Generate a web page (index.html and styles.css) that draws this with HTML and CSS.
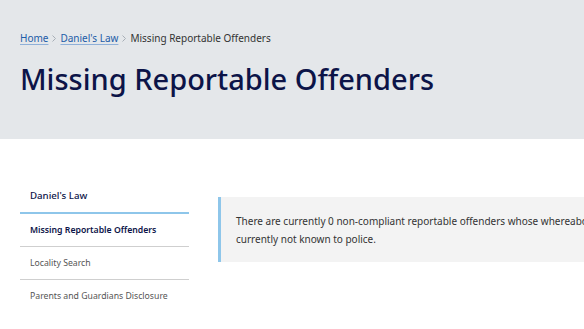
FILE: index.html
```html
<!DOCTYPE html>
<html lang="en">
  <head>
    <meta charset="UTF-8" />
    <meta name="viewport" content="width=device-width, initial-scale=1.0" />
    <title>Missing Reportable Offenders</title>
    <link rel="stylesheet" href="styles.css">
  </head>
  <body>
    <!-- 页头 -->
    <header class="banner">
      <nav class="crumbs">
        <a href="#">Home</a>
        <svg class="sep" width="4" height="7" viewBox="0 0 4 7"><path d="M0.5 0.5L3.5 3.5L0.5 6.5"></path></svg>
        <a href="#">Daniel's Law</a>
        <svg class="sep" width="4" height="7" viewBox="0 0 4 7"><path d="M0.5 0.5L3.5 3.5L0.5 6.5"></path></svg>
        <span class="current">Missing Reportable Offenders</span>
      </nav>
      <h1 class="title">Missing Reportable Offenders</h1>
    </header>

    <div class="main">
      <!-- 侧栏 -->
      <aside class="side">
        <div class="side-head">Daniel's Law</div>
        <a class="side-link active" href="#">Missing Reportable Offenders</a>
        <a class="side-link" href="#">Locality Search</a>
        <a class="side-link last" href="#">Parents and Guardians Disclosure</a>
      </aside>

      <!-- 内容 -->
      <section class="content">
        <div class="notice">
          There are currently 0 non-compliant reportable offenders whose whereabouts are
          currently not known to police.
        </div>
      </section>
    </div>
  </body>
</html>
```

FILE: styles.css
```css
body {
  margin: 0;
  padding: 0;
  background: #fff;
  color: #333;
  font-family: 'Noto Sans', 'Open Sans', sans-serif;
  overflow: hidden;
}

.banner {
  background-color: #e4e7ea;
  padding: 30px 20px 36px;
  height: 73px;
}

.crumbs {
  display: flex;
  align-items: center;
  gap: 4px;
  font-size: 10px;
  line-height: 16px;
  color: #333;
}

.crumbs a {
  color: #1d5ca8;
  text-decoration: underline;
  text-decoration-color: #8fb0d8;
  text-underline-offset: 2px;
}

.crumbs .sep {
  fill: none;
  stroke: #a7aeb6;
  stroke-width: 1;
  margin-top: 1px;
}

.title {
  margin: 15px 0 0;
  font-size: 29px;
  font-weight: 500;
  line-height: 36px;
  color: #0c1448;
}

.main {
  display: flex;
  gap: 29px;
  padding: 38px 0 0 20px;
}

.side {
  width: 169px;
  flex: none;
}

.side-head {
  font-size: 9.7px;
  font-weight: 500;
  color: #0c1448;
  padding: 12px 10px 10px;
  border-bottom: 2px solid #8ec6ea;
}

.side-link {
  display: block;
  font-size: 8.7px;
  color: #555;
  text-decoration: none;
  padding: 9px 10px 9px;
  border-bottom: 1px solid #cfcfcf;
  line-height: 14px;
}

.side-link.active {
  color: #0c1448;
  font-weight: 600;
}

.side-link.last {
  border-bottom: none;
}

.content {
  flex: 1;
  min-width: 0;
  padding-top: 20px;
}

.notice {
  background-color: #f3f3f3;
  border-left: 3px solid #8ec6ea;
  padding: 15px 15px 14px;
  font-size: 10px;
  line-height: 18px;
  color: #333;
  width: 420px;
}
```
